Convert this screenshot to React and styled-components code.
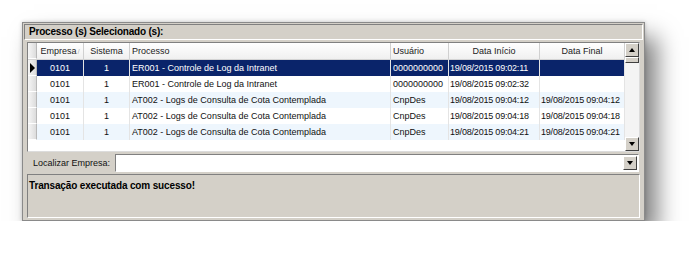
import styled, { createGlobalStyle } from "styled-components";

const GlobalStyle = createGlobalStyle`
  body {
    margin: 0;
    background: #ffffff;
    font-family: "Liberation Sans", Arial, sans-serif;
    font-size: 9px;
  }
`;

const columns = "9px 47px 46px 261px 58px 91px 1fr";

const rows = [
  { empresa: "0101", sistema: "1", processo: "ER001 - Controle de Log da Intranet", usuario: "0000000000", inicio: "19/08/2015 09:02:11", final: "" },
  { empresa: "0101", sistema: "1", processo: "ER001 - Controle de Log da Intranet", usuario: "0000000000", inicio: "19/08/2015 09:02:32", final: "" },
  { empresa: "0101", sistema: "1", processo: "AT002 - Logs de Consulta de Cota Contemplada", usuario: "CnpDes", inicio: "19/08/2015 09:04:12", final: "19/08/2015 09:04:12" },
  { empresa: "0101", sistema: "1", processo: "AT002 - Logs de Consulta de Cota Contemplada", usuario: "CnpDes", inicio: "19/08/2015 09:04:18", final: "19/08/2015 09:04:18" },
  { empresa: "0101", sistema: "1", processo: "AT002 - Logs de Consulta de Cota Contemplada", usuario: "CnpDes", inicio: "19/08/2015 09:04:21", final: "19/08/2015 09:04:21" },
];

const App = () => {
  return (
    <Page>
      <GlobalStyle />
      <Window>
        <TitleBar>Processo (s) Selecionado (s):</TitleBar>
        <GridBox>
          <Table>
            <HeaderRow>
              <Indicator />
              <HeadCell>
                Empresa<SortMark>/</SortMark>
              </HeadCell>
              <HeadCell>Sistema</HeadCell>
              <HeadCell $left>Processo</HeadCell>
              <HeadCell $left>Usuário</HeadCell>
              <HeadCell>Data Início</HeadCell>
              <HeadCell>Data Final</HeadCell>
            </HeaderRow>
            {rows.map((r, i) => (
              <Row key={i} $selected={i === 0} $alt={i % 2 === 0}>
                <Indicator>{i === 0 && <Arrow />}</Indicator>
                <Cell $center>{r.empresa}</Cell>
                <Cell $center>{r.sistema}</Cell>
                <Cell>{r.processo}</Cell>
                <Cell>{r.usuario}</Cell>
                <Cell $date>{r.inicio}</Cell>
                <Cell $date>{r.final}</Cell>
              </Row>
            ))}
          </Table>
          <ScrollBar>
            <ScrollButton>
              <UpArrow />
            </ScrollButton>
            <Thumb />
            <Track />
            <ScrollButton>
              <DownArrow />
            </ScrollButton>
          </ScrollBar>
        </GridBox>
        <SearchRow>
          <Label>Localizar Empresa:</Label>
          <Combo>
            <ComboField />
            <ComboButton>
              <DownArrow />
            </ComboButton>
          </Combo>
        </SearchRow>
        <Status>Transação executada com sucesso!</Status>
      </Window>
    </Page>
  );
};

export default App;

const Page = styled.div`
  padding: 22px 0 0 22px;
`;

const Window = styled.div`
  width: 623px;
  height: 199px;
  box-sizing: border-box;
  background: #d4d0c8;
  border: 1px solid #8a8a8a;
  padding: 1px;
  display: flex;
  flex-direction: column;
  box-shadow: 12px 15px 22px rgba(0, 0, 0, 0.5), 0 0 4px rgba(0, 0, 0, 0.2);
  color: #000;
`;

const TitleBar = styled.div`
  height: 16px;
  box-sizing: border-box;
  border-top: 1px solid #808080;
  border-bottom: 1px solid #ffffff;
  border-left: 1px solid #808080;
  border-right: 1px solid #ffffff;
  padding-left: 4px;
  font-weight: bold;
  font-size: 10px;
  letter-spacing: -0.2px;
  line-height: 14px;
`;

const GridBox = styled.div`
  margin: 2px 3px 0 3px;
  height: 110px;
  box-sizing: border-box;
  border: 1px solid #808080;
  border-right-color: #dcdcdc;
  border-bottom-color: #dcdcdc;
  background: #ffffff;
  display: flex;
`;

const Table = styled.div`
  flex: 1;
  display: flex;
  flex-direction: column;
`;

const HeaderRow = styled.div`
  display: grid;
  grid-template-columns: ${columns};
  height: 16px;
  background: linear-gradient(#ffffff, #f0f0f0);
  border-bottom: 1px solid #d4d4d4;
`;

const HeadCell = styled.div`
  display: flex;
  align-items: center;
  justify-content: ${(p) => (p.$left ? "flex-start" : "center")};
  padding-left: ${(p) => (p.$left ? "2px" : "0")};
  border-right: 1px solid #d0d0d0;
  white-space: nowrap;
  overflow: hidden;
  color: #222;
`;

const SortMark = styled.span`
  color: #b8b8b8;
  font-size: 8px;
  margin-left: 1px;
`;

const Row = styled.div`
  display: grid;
  grid-template-columns: ${columns};
  height: 16px;
  background: ${(p) => (p.$selected ? "#0a246a" : p.$alt ? "#eef6fd" : "#ffffff")};
  color: ${(p) => (p.$selected ? "#ffffff" : "#111111")};
`;

const Indicator = styled.div`
  background: linear-gradient(90deg, #f6f6f6, #dcdcdc);
  border-right: 1px solid #b8b8b8;
  border-bottom: 1px solid #ffffff;
  display: flex;
  align-items: center;
  justify-content: center;
  color: #000;
`;

const Arrow = styled.div`
  width: 0;
  height: 0;
  border-top: 5px solid transparent;
  border-bottom: 5px solid transparent;
  border-left: 5px solid #000;
`;

const Cell = styled.div`
  display: flex;
  align-items: center;
  justify-content: ${(p) => (p.$center ? "center" : "flex-start")};
  padding-left: ${(p) => (p.$center ? "0" : p.$date ? "1px" : "2px")};
  letter-spacing: ${(p) => (p.$date ? "-0.2px" : "0")};
  border-right: 1px solid #e4e4e4;
  white-space: nowrap;
  overflow: hidden;
`;

const ScrollBar = styled.div`
  width: 14px;
  display: flex;
  flex-direction: column;
  background: #f4f4f4;
`;

const ScrollButton = styled.div`
  height: 14px;
  box-sizing: border-box;
  background: #d4d0c8;
  border: 1px solid;
  border-color: #ffffff #404040 #404040 #ffffff;
  display: flex;
  align-items: center;
  justify-content: center;
`;

const Thumb = styled.div`
  height: 6px;
  box-sizing: border-box;
  background: #d4d0c8;
  border: 1px solid;
  border-color: #ffffff #404040 #404040 #ffffff;
`;

const Track = styled.div`
  flex: 1;
`;

const UpArrow = styled.div`
  width: 0;
  height: 0;
  border-left: 3px solid transparent;
  border-right: 3px solid transparent;
  border-bottom: 4px solid #000;
`;

const DownArrow = styled.div`
  width: 0;
  height: 0;
  border-left: 3px solid transparent;
  border-right: 3px solid transparent;
  border-top: 4px solid #000;
`;

const SearchRow = styled.div`
  height: 22px;
  display: flex;
  align-items: center;
  padding: 0 3px 0 9px;
`;

const Label = styled.span`
  width: 82px;
  white-space: nowrap;
  color: #111;
`;

const Combo = styled.div`
  width: 524px;
  height: 18px;
  box-sizing: border-box;
  border: 1px solid;
  border-color: #808080 #ffffff #ffffff #808080;
  background: #ffffff;
  display: flex;
  padding: 1px;
`;

const ComboField = styled.div`
  flex: 1;
`;

const ComboButton = styled.div`
  width: 14px;
  box-sizing: border-box;
  background: #d4d0c8;
  border: 1px solid;
  border-color: #ffffff #404040 #404040 #ffffff;
  display: flex;
  align-items: center;
  justify-content: center;
`;

const Status = styled.div`
  margin: 0 3px;
  height: 44px;
  box-sizing: border-box;
  border: 1px solid;
  border-color: #808080 #ffffff #ffffff #808080;
  padding: 5px 1px;
  font-weight: bold;
  font-size: 10px;
  letter-spacing: -0.15px;
`;
